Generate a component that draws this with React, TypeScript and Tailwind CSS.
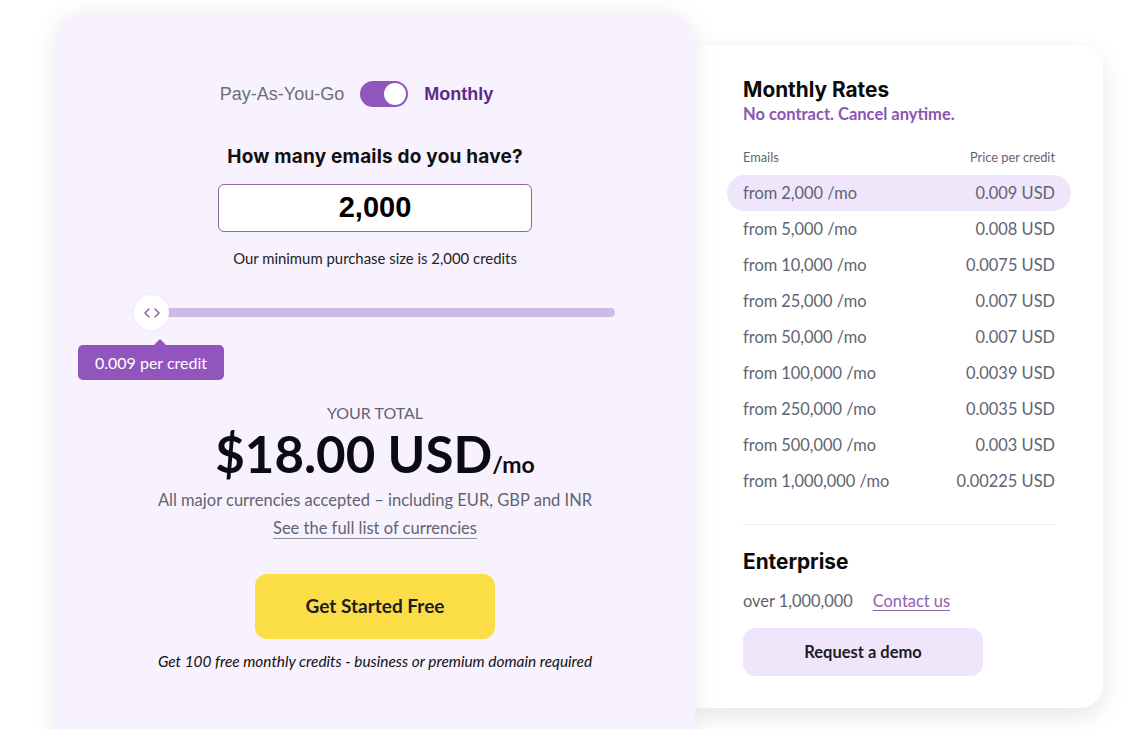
import React from "react";

const rates: [string, string][] = [
  ["from 2,000 /mo", "0.009 USD"],
  ["from 5,000 /mo", "0.008 USD"],
  ["from 10,000 /mo", "0.0075 USD"],
  ["from 25,000 /mo", "0.007 USD"],
  ["from 50,000 /mo", "0.007 USD"],
  ["from 100,000 /mo", "0.0039 USD"],
  ["from 250,000 /mo", "0.0035 USD"],
  ["from 500,000 /mo", "0.003 USD"],
  ["from 1,000,000 /mo", "0.00225 USD"],
];

export default function App() {
  return (
    <div className="w-[1147px] h-[729px] overflow-hidden bg-white font-['Lato',sans-serif]">
      <div className="flex items-start pl-[55px]">
        {/* Left card */}
        <div className="relative z-10 mt-[14px] w-[640px] h-[780px] shrink-0 rounded-[28px] bg-[#f8f2fe] shadow-[0_0_24px_rgba(0,0,0,0.08)] flex flex-col items-center pt-[67px]">
          <div className="flex items-center h-[26px] mr-[37px]">
            <span className="font-['Liberation_Sans',sans-serif] text-[18px] text-[#6b6f7a]">Pay-As-You-Go</span>
            <div className="ml-[16px] w-[48px] h-[26px] rounded-full bg-[#9155bd] flex items-center justify-end pr-[2px]">
              <div className="w-[22px] h-[22px] rounded-full bg-white"></div>
            </div>
            <span className="ml-[16px] font-['Liberation_Sans',sans-serif] font-bold text-[18px] text-[#5d2b87]">Monthly</span>
          </div>

          <div className="mt-[37px] font-['Inter',sans-serif] font-bold text-[19px] tracking-[0.2px] text-[#111] leading-[26px]">How many emails do you have?</div>

          <div className="mt-[14px] w-[314px] h-[48px] rounded-[6px] border border-[#8a6a9e] bg-white flex items-center justify-center">
            <span className="font-['Liberation_Sans',sans-serif] font-bold text-[29px] text-black">2,000</span>
          </div>

          <div className="mt-[16px] text-[14.9px] text-[#222] leading-[20px]">Our minimum purchase size is 2,000 credits</div>

          {/* slider */}
          <div className="relative mt-[25px] w-[640px] h-[40px]">
            <div className="absolute left-[95px] top-[15px] w-[465px] h-[9px] rounded-full bg-[#cdb9e6]"></div>
            <div className="absolute left-[79px] top-[2px] w-[35px] h-[35px] rounded-full bg-white shadow-[0_0_4px_rgba(0,0,0,0.06)] flex items-center justify-center">
              <svg width="18" height="12" viewBox="0 0 18 12" fill="none" stroke="#8e6aa8" strokeWidth="1.6" strokeLinecap="round" strokeLinejoin="round">
                <path d="M6 2 L2 6 L6 10" />
                <path d="M12 2 L16 6 L12 10" />
              </svg>
            </div>
            <div className="absolute left-[23px] top-[52px] w-[146px] h-[35px] rounded-[5px] bg-[#9155bd] flex items-center justify-center">
              <span className="text-[16px] text-white">0.009 per credit</span>
            </div>
            <div className="absolute left-[98px] top-[46px] w-0 h-0 border-l-[7px] border-r-[7px] border-b-[7px] border-l-transparent border-r-transparent border-b-[#9155bd]"></div>
          </div>

          <div className="mt-[72px] text-[16px] text-[#5f6470] leading-[16px]">YOUR TOTAL</div>
          <div className="mt-[7px] flex items-baseline h-[52px]">
            <span className="inline-block font-bold text-[51px] leading-[52px] text-[#0b0b14]">$18.00 USD</span>
            <span className="inline-block font-bold text-[23px] leading-[24px] text-[#0b0b14]">/mo</span>
          </div>
          <div className="mt-[9px] text-[16.5px] text-[#5f6470] leading-[22px]">All major currencies accepted – including EUR, GBP and INR</div>
          <div className="mt-[6px] text-[16.5px] text-[#5f6470] leading-[22px] underline underline-offset-[4px] decoration-[#8c8f98]">See the full list of currencies</div>

          <button className="mt-[35px] w-[240px] h-[65px] rounded-[12px] bg-[#fbdd45] font-bold text-[19px] text-[#1c1c24]">Get Started Free</button>
          <div className="mt-[12px] italic text-[15.4px] text-[#111] leading-[20px]">Get 100 free monthly credits - business or premium domain required</div>
        </div>

        {/* Right card */}
        <div className="mt-[45px] w-[408px] h-[663px] shrink-0 rounded-r-[24px] bg-white shadow-[0_8px_24px_rgba(0,0,0,0.10)] pl-[48px] pr-[48px] pt-[32px]">
          <div className="font-['Inter',sans-serif] font-bold text-[20.8px] text-[#0b0b0b] leading-[26px]">Monthly Rates</div>
          <div className="mt-[1px] font-bold text-[16.5px] text-[#8b55b3] leading-[20px]">No contract. Cancel anytime.</div>
          <div className="mt-[25px] flex justify-between text-[12.8px] text-[#5f6470] leading-[16px]">
            <span>Emails</span>
            <span>Price per credit</span>
          </div>
          <div className="mt-[10px] flex flex-col">
            {rates.map(([a, b], i) => (
              <div
                key={a}
                className={
                  i === 0
                    ? "h-[36px] -mx-[16px] px-[16px] rounded-full bg-[#efe6fb] flex items-center justify-between text-[16.4px] text-[#5f6470]"
                    : "h-[36px] flex items-center justify-between text-[16.4px] text-[#5f6470]"
                }
              >
                <span>{a}</span>
                <span>{b}</span>
              </div>
            ))}
          </div>
          <div className="mt-[25px] h-px bg-[#ececef]"></div>
          <div className="mt-[24px] font-['Inter',sans-serif] font-bold text-[20.8px] text-[#0b0b0b] leading-[26px]">Enterprise</div>
          <div className="mt-[15px] flex items-center text-[16.4px] leading-[22px]">
            <span className="text-[#5f6470]">over 1,000,000</span>
            <span className="ml-[20px] text-[#8d62a8] underline underline-offset-[3px]">Contact us</span>
          </div>
          <button className="mt-[16px] w-[240px] h-[48px] rounded-[12px] bg-[#efe6fb] font-bold text-[16.5px] text-[#1c1c24]">Request a demo</button>
        </div>
      </div>
    </div>
  );
}
